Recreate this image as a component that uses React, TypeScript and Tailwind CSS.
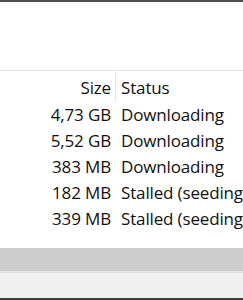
export default function App() {
  const rows = [
    ["4,73 GB", "Downloading"],
    ["5,52 GB", "Downloading"],
    ["383 MB", "Downloading"],
    ["182 MB", "Stalled (seeding)"],
    ["339 MB", "Stalled (seeding)"],
  ];
  return (
    <div
      className="w-[243px] h-[300px] overflow-hidden bg-white flex flex-col text-[17px] tracking-[-0.15px] text-[#111]"
      style={{ fontFamily: '"Open Sans", "Noto Sans", sans-serif' }}
    >
      <div className="h-[2px] bg-[#4d4d4d] shrink-0" />
      <div className="h-[68px] shrink-0 bg-white" />
      <div className="h-[1px] bg-[#e5e5e5] shrink-0" />
      <div className="flex h-[31px] shrink-0 whitespace-nowrap">
        <div className="w-[115px] shrink-0 text-right pr-[4px] pt-[2px] flex items-center justify-end">Size</div>
        <div className="w-[1px] self-stretch bg-[#e5e5e5] shrink-0" />
        <div className="pl-[5px] pt-[2px] flex items-center">Status</div>
      </div>
      <div className="flex flex-col">
        {rows.map(([s, t], i) => (
          <div key={i} className="flex h-[26px] items-center whitespace-nowrap">
            <div className="w-[115px] shrink-0 text-right pr-[4px]">{s}</div>
            <div className="w-[1px] shrink-0" />
            <div className="pl-[5px]">{t}</div>
          </div>
        ))}
      </div>
      <div className="flex-1" />
      <div className="h-[23px] bg-[#cdcdcd] shrink-0" />
      <div className="h-[2px] bg-[#e3e3e3] shrink-0" />
      <div className="h-[25px] bg-[#f0f0f0] shrink-0" />
      <div className="h-[2px] bg-[#3c3c3c] shrink-0" />
    </div>
  );
}
